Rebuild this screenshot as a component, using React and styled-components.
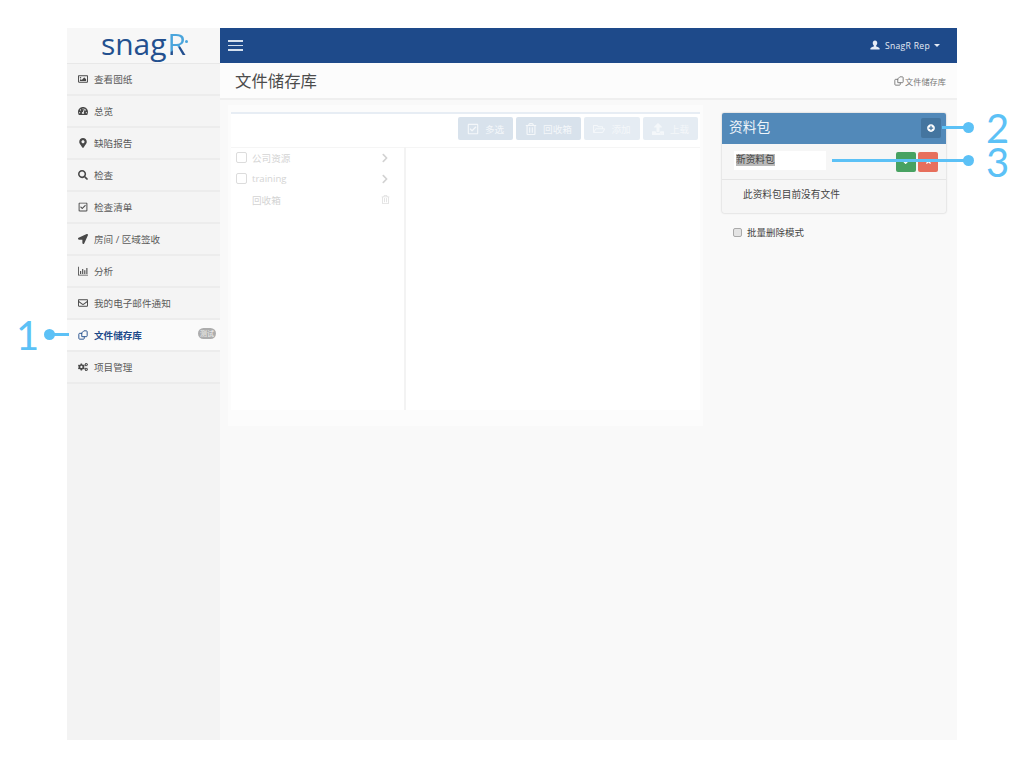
import React from 'react';
import styled, { createGlobalStyle } from 'styled-components';
import {
  FaRegImage,
  FaTachometerAlt,
  FaMapMarkerAlt,
  FaSearch,
  FaRegCheckSquare,
  FaLocationArrow,
  FaRegEnvelope,
  FaCogs,
  FaRegTrashAlt,
  FaRegFolderOpen,
  FaUpload,
  FaPlusCircle,
  FaCheck,
  FaTimes,
  FaChevronRight,
} from 'react-icons/fa';

const FONT = `"Open Sans", "Noto Sans CJK SC", sans-serif`;
const BLUE = '#1e4a8a';
const CALLOUT = '#5cc1f6';

const GlobalStyle = createGlobalStyle`
  html, body {
    margin: 0;
    padding: 0;
    background: #fff;
    font-family: ${FONT};
  }
  * { box-sizing: border-box; }
`;

const Page = styled.div`
  position: relative;
  width: 1024px;
  height: 768px;
  padding: 28px 67px;
  overflow: hidden;
`;

const Shell = styled.div`
  display: grid;
  grid-template-columns: 153px 1fr;
  width: 890px;
  height: 712px;
`;

const Sidebar = styled.aside`
  background: #f3f3f3;
`;

const Logo = styled.div`
  display: flex;
  justify-content: center;
  align-items: flex-start;
  height: 36px;
  background: #f7f7f7;
  border-bottom: 1px solid #e8e8e8;
  font-family: "Open Sans", sans-serif;
  font-size: 30px;
  line-height: 32px;
  color: #23508f;
`;

const LogoMark = styled.span`
  position: relative;
  margin-left: 1px;
  background: linear-gradient(150deg, #4aa5dc 58%, #23508f 62%);
  -webkit-background-clip: text;
  background-clip: text;
  color: transparent;

  &:after {
    content: '';
    position: absolute;
    top: 12px;
    right: -2px;
    width: 3px;
    height: 3px;
    border-radius: 50%;
    background: #4aa5dc;
  }
`;

const Menu = styled.ul`
  list-style: none;
  margin: 0;
  padding: 0;
`;

const MenuItem = styled.li`
  display: flex;
  align-items: center;
  height: 32px;
  padding-left: 11px;
  border-bottom: 2px solid #ececec;
  background: ${props => (props.$active ? '#fafafa' : '#f4f4f4')};
  color: ${props => (props.$active ? BLUE : '#5a5a5a')};
  font-size: 9.6px;
  font-weight: ${props => (props.$active ? 600 : 400)};

  svg {
    flex: none;
    width: 10px;
    height: 10px;
    margin-right: 6px;
    color: ${props => (props.$active ? BLUE : '#484848')};
  }
`;

const Badge = styled.span`
  margin-left: auto;
  margin-right: 4px;
  margin-top: -4px;
  width: 18px;
  height: 11px;
  border-radius: 6px;
  background: #adadad;
  color: #f4f4f4;
  font-size: 7px;
  font-weight: 400;
  line-height: 11px;
  text-align: center;
`;

const Main = styled.main`
  display: flex;
  flex-direction: column;
  background: #f9f9f9;
`;

const Navbar = styled.header`
  display: flex;
  justify-content: space-between;
  align-items: center;
  height: 35px;
  padding: 0 17px 0 8px;
  background: ${BLUE};
  color: #e6ecf5;
`;

const Burger = styled.div`
  display: flex;
  flex-direction: column;
  gap: 3px;
  width: 15px;

  i {
    display: block;
    height: 1.5px;
    background: #d5e0ee;
  }
`;

const UserMenu = styled.div`
  display: flex;
  align-items: center;
  font-size: 8.6px;
  letter-spacing: 0.3px;

  svg {
    width: 10px;
    height: 10px;
    margin: -2px 5px 0 0;
  }
`;

const Caret = styled.span`
  width: 0;
  height: 0;
  margin-left: 4px;
  border-top: 3px solid #e6ecf5;
  border-left: 3px solid transparent;
  border-right: 3px solid transparent;
`;

const TitleBar = styled.div`
  display: flex;
  justify-content: space-between;
  align-items: center;
  height: 37px;
  padding: 0 11px 3px 15px;
  background: #fcfcfc;
  border-bottom: 2px solid #efefef;
`;

const Title = styled.h1`
  margin: 1px 0 0;
  color: #4c4c4c;
  font-size: 16.4px;
  font-weight: 400;
`;

const Crumb = styled.div`
  display: flex;
  align-items: center;
  gap: 1px;
  margin-top: 3px;
  color: #777;
  font-size: 8.2px;

  svg {
    width: 10px;
    height: 10px;
  }
`;

const Content = styled.div`
  display: flex;
  align-items: flex-start;
  padding: 5px 11px 0 8px;
`;

const Browser = styled.section`
  width: 475px;
  height: 321px;
  padding: 7px 3px 0;
  background: #fcfcfc;
`;

const BrowserCard = styled.div`
  height: 298px;
  background: #fff;
  border-top: 2px solid #e7edf4;
`;

const Toolbar = styled.div`
  display: flex;
  justify-content: flex-end;
  gap: 3px;
  height: 34px;
  padding: 3px 2px 0 0;
  border-bottom: 1px solid #f5f5f5;
`;

const ToolButton = styled.div`
  display: flex;
  align-items: center;
  justify-content: center;
  gap: 6px;
  width: ${props => props.$width}px;
  height: 23px;
  border-radius: 2px;
  background: ${props => (props.$dim ? '#e5ecf3' : '#d8e2ec')};
  color: #f4f7fa;
  font-size: 9.6px;

  svg {
    width: 12px;
    height: 12px;
  }
`;

const Columns = styled.div`
  display: grid;
  grid-template-columns: 175px 1fr;
  height: 262px;
`;

const Tree = styled.div`
  margin-top: -1px;
  border-right: 2px solid #f3f3f3;
`;

const TreeRow = styled.div`
  display: flex;
  align-items: center;
  height: 21px;
  padding: 0 14px 0 5px;
  color: #d4d4d4;
  font-size: 9.6px;

  svg {
    margin-left: auto;
    width: ${props => (props.$trash ? 9 : 10)}px;
    height: ${props => (props.$trash ? 9 : 10)}px;
    color: ${props => (props.$trash ? '#e0e0e0' : '#d2d2d2')};
  }
`;

const TreeBox = styled.span`
  flex: none;
  width: 11px;
  height: 11px;
  margin-right: 5px;
  border: 1px solid #dcdcdc;
  border-radius: 2px;
`;

const TreeLabel = styled.span`
  margin-left: ${props => (props.$indent ? '16px' : '0')};
`;

const Side = styled.div`
  width: 224px;
  margin: 8px 0 0 19px;
`;

const Panel = styled.section`
  height: 100px;
  border-radius: 2px;
  background: #f6f6f6;
  box-shadow: 0 0 2px rgba(0, 0, 0, 0.25);
  overflow: hidden;
`;

const PanelHead = styled.div`
  display: flex;
  justify-content: space-between;
  align-items: center;
  height: 31px;
  padding: 0 5px 0 7px;
  background: #5289b9;
  color: #eef4fa;
  font-size: 13.7px;
`;

const PanelTitle = styled.span`
  margin-top: -5px;
`;

const AddButton = styled.div`
  display: flex;
  align-items: center;
  justify-content: center;
  width: 20px;
  height: 20px;
  margin-top: -1px;
  border-radius: 2px;
  background: #44759f;
  color: #fff;

  svg {
    width: 8px;
    height: 8px;
  }
`;

const NewRow = styled.div`
  display: flex;
  align-items: center;
  gap: 2px;
  height: 36px;
  padding: 0 8px 0 12px;
  border-bottom: 1px solid #e5e5e5;
`;

const NameInput = styled.div`
  display: flex;
  align-items: center;
  width: 92px;
  height: 19px;
  margin-right: auto;
  margin-bottom: 3px;
  padding-left: 2px;
  background: #fff;
  color: #444;
  font-size: 9.7px;

  span {
    background: #b9b9b9;
    line-height: 12px;
  }
`;

const SquareButton = styled.div`
  display: flex;
  align-items: center;
  justify-content: center;
  width: 20px;
  height: 20px;
  border-radius: 2px;
  background: ${props => props.$bg};
  color: #fff;

  svg {
    width: 7px;
    height: 7px;
  }
`;

const EmptyNote = styled.div`
  padding: 7px 0 0 21px;
  color: #444;
  font-size: 9.7px;
  line-height: 16px;
`;

const BulkMode = styled.label`
  display: flex;
  align-items: center;
  gap: 5px;
  margin: 12px 0 0 11px;
  color: #444;
  font-size: 9.5px;
`;

const BulkBox = styled.span`
  width: 9px;
  height: 9px;
  border: 1px solid #aaa;
  border-radius: 2px;
  background: #e4e4e4;
`;

// the numbered blue markers lie over the screen
const Digit = styled.div`
  position: absolute;
  left: ${props => props.$x}px;
  top: ${props => props.$y}px;
  color: ${CALLOUT};
  font-family: Lato, sans-serif;
  font-size: 40px;
  font-weight: 400;
  line-height: 30px;
`;

const Lead = styled.div`
  position: absolute;
  left: ${props => props.$x}px;
  top: ${props => props.$y - 1.5}px;
  width: ${props => props.$w}px;
  height: 3px;
  background: ${CALLOUT};
`;

const Dot = styled.div`
  position: absolute;
  left: ${props => props.$x - 5.5}px;
  top: ${props => props.$y - 5.5}px;
  width: 11px;
  height: 11px;
  border-radius: 50%;
  background: ${CALLOUT};
`;

const FilesIcon = () => (
  <svg viewBox="0 0 12 12" fill="none" stroke="currentColor" strokeWidth="1.1">
    <path d="M5 4 H2 a1 1 0 0 0 -1 1 V10 a1 1 0 0 0 1 1 H6.500 a1 1 0 0 0 1 -1 V8" />
    <path d="M4.500 8 V3.500 L7 1 H10 a1 1 0 0 1 1 1 V7 a1 1 0 0 1 -1 1 Z" />
  </svg>
);

const BarsIcon = () => (
  <svg viewBox="0 0 12 12" fill="currentColor">
    <path d="M0 1h1v9.500h11V11.500H0z" />
    <path d="M2.500 6h1.300v3.500H2.500zM5 3.500h1.300v6H5zM7.500 5h1.300v4.500H7.500zM10 2.500h1.300v7H10z" />
  </svg>
);

const UserIcon = () => (
  <svg viewBox="0 0 12 12" fill="currentColor">
    <path d="M6 0.500c1.700 0 2.700 1.300 2.700 3 0 1.300-.6 2.400-1.300 3v1.200c1.500.5 3.600 1.100 4.100 2.300v1.500H.5V10c.5-1.200 2.600-1.800 4.100-2.300V6.500c-.7-.6-1.300-1.700-1.300-3 0-1.700 1-3 2.700-3z" />
  </svg>
);

const MENU = [
  { label: '查看图纸', icon: <FaRegImage /> },
  { label: '总览', icon: <FaTachometerAlt /> },
  { label: '缺陷报告', icon: <FaMapMarkerAlt /> },
  { label: '检查', icon: <FaSearch /> },
  { label: '检查清单', icon: <FaRegCheckSquare /> },
  { label: '房间 / 区域签收', icon: <FaLocationArrow /> },
  { label: '分析', icon: <BarsIcon /> },
  { label: '我的电子邮件通知', icon: <FaRegEnvelope /> },
  { label: '文件储存库', icon: <FilesIcon />, active: true, badge: '测试' },
  { label: '项目管理', icon: <FaCogs /> },
];

const TOOLS = [
  { label: '多选', icon: <FaRegCheckSquare />, width: 55 },
  { label: '回收箱', icon: <FaRegTrashAlt />, width: 65 },
  { label: '添加', icon: <FaRegFolderOpen />, width: 56, dim: true },
  { label: '上载', icon: <FaUpload />, width: 55, dim: true },
];

const App = () => (
  <Page>
    <GlobalStyle />
    <Shell>
      <Sidebar>
        <Logo>
          snag<LogoMark>R</LogoMark>
        </Logo>
        <Menu>
          {MENU.map(item => (
            <MenuItem key={item.label} $active={item.active}>
              {item.icon}
              {item.label}
              {item.badge && <Badge>{item.badge}</Badge>}
            </MenuItem>
          ))}
        </Menu>
      </Sidebar>

      <Main>
        <Navbar>
          <Burger>
            <i />
            <i />
            <i />
          </Burger>
          <UserMenu>
            <UserIcon />
            SnagR Rep
            <Caret />
          </UserMenu>
        </Navbar>

        <TitleBar>
          <Title>文件储存库</Title>
          <Crumb>
            <FilesIcon />
            文件储存库
          </Crumb>
        </TitleBar>

        <Content>
          <Browser>
            <BrowserCard>
              <Toolbar>
                {TOOLS.map(tool => (
                  <ToolButton key={tool.label} $width={tool.width} $dim={tool.dim}>
                    {tool.icon}
                    {tool.label}
                  </ToolButton>
                ))}
              </Toolbar>
              <Columns>
                <Tree>
                  <TreeRow>
                    <TreeBox />
                    公司资源
                    <FaChevronRight />
                  </TreeRow>
                  <TreeRow>
                    <TreeBox />
                    training
                    <FaChevronRight />
                  </TreeRow>
                  <TreeRow $trash>
                    <TreeLabel $indent>回收箱</TreeLabel>
                    <FaRegTrashAlt />
                  </TreeRow>
                </Tree>
                <div />
              </Columns>
            </BrowserCard>
          </Browser>

          <Side>
            <Panel>
              <PanelHead>
                <PanelTitle>资料包</PanelTitle>
                <AddButton>
                  <FaPlusCircle />
                </AddButton>
              </PanelHead>
              <NewRow>
                <NameInput>
                  <span>新资料包</span>
                </NameInput>
                <SquareButton $bg="#48a262">
                  <FaCheck />
                </SquareButton>
                <SquareButton $bg="#e76f5c">
                  <FaTimes />
                </SquareButton>
              </NewRow>
              <EmptyNote>此资料包目前没有文件</EmptyNote>
            </Panel>
            <BulkMode>
              <BulkBox />
              批量删除模式
            </BulkMode>
          </Side>
        </Content>
      </Main>
    </Shell>

    <Digit $x={16} $y={320}>1</Digit>
    <Dot $x={49} $y={334} />
    <Lead $x={50} $y={334} $w={19} />

    <Digit $x={986} $y={113}>2</Digit>
    <Lead $x={942} $y={127} $w={26} />
    <Dot $x={968} $y={127} />

    <Digit $x={986} $y={147}>3</Digit>
    <Lead $x={832} $y={160} $w={136} />
    <Dot $x={968} $y={160} />
  </Page>
);

export default App;
